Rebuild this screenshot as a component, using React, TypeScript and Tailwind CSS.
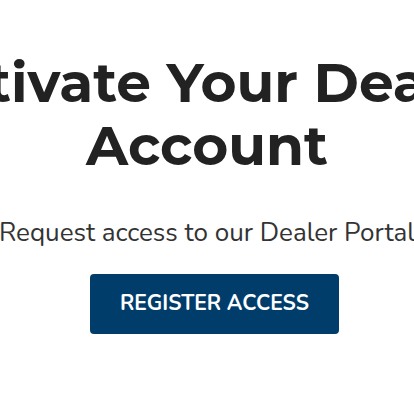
export default function App() {
	return (
		<div className="w-[414px] h-[414px] overflow-hidden bg-white flex justify-center">
			{/* Wide hero block, wider than the viewport so the heading runs off both sides */}
			<div className="w-[700px] shrink-0 flex flex-col items-center pt-[51px]">
				<h1 className="font-['Montserrat','DejaVu_Sans',sans-serif] font-bold text-[55px] leading-[63px] text-[#222222] text-center">
					Activate Your Dealer
					<br />
					Account
				</h1>
				<p className="mt-[40px] font-['Nunito','Lato',sans-serif] text-[26px] leading-[32px] text-[#333333] text-center">
					Request access to our Dealer Portal
				</p>
				<button className="mt-[25px] ml-[15px] w-[249px] h-[60px] rounded-[4px] bg-[#003d6b] text-white font-['Nunito','Lato',sans-serif] font-bold text-[21px]">
					REGISTER ACCESS
				</button>
			</div>
		</div>
	)
}
